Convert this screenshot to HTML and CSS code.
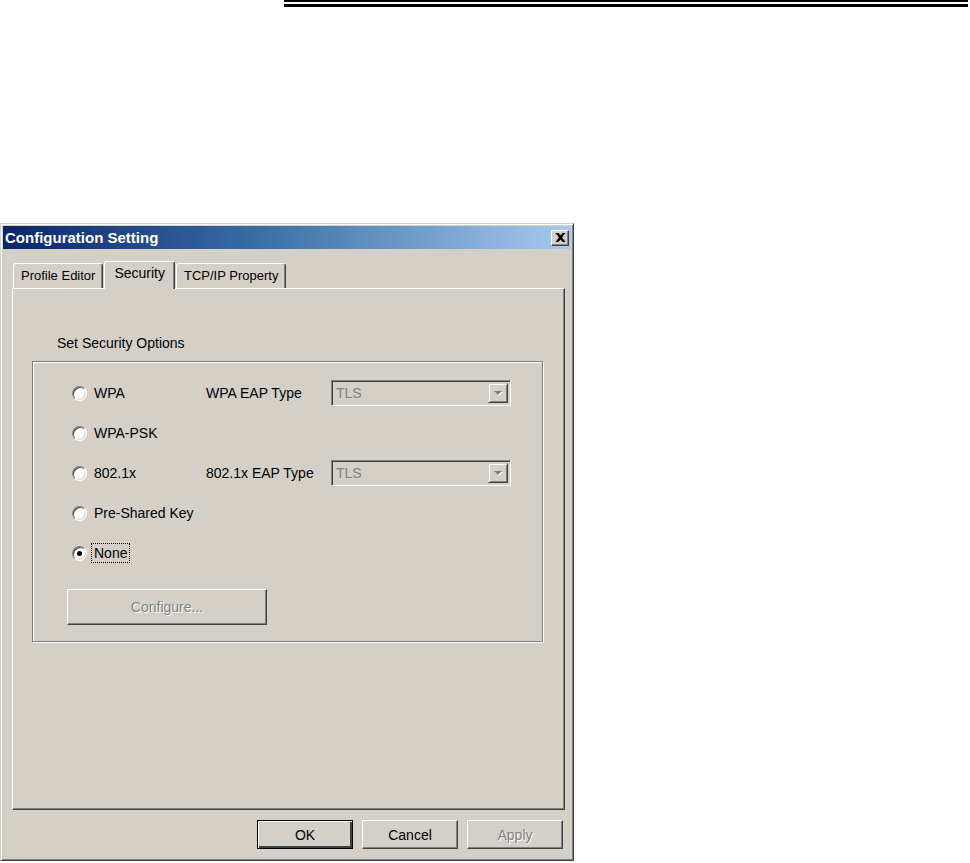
FILE: index.html
```html
<!DOCTYPE html>
<html>
<head>
	<meta charset="utf-8">
	<title>Configuration Setting</title>
	<link rel="stylesheet" href="styles.css">
</head>
<body>
	<div class="rule"></div>

	<div class="dialog">
		<div class="titlebar">
			<span class="title">Configuration Setting</span>
			<span class="close">
				<svg width="11" height="9" viewBox="0 0 11 9"><path d="M0.5 0h3l2 2.6L7.5 0h3L7 4.5 10.5 9h-3l-2-2.6L3.5 9h-3L4 4.5z" fill="#000"/></svg>
			</span>
		</div>

		<div class="tabs">
			<div class="tab">Profile Editor</div>
			<div class="tab active">Security</div>
			<div class="tab">TCP/IP Property</div>
		</div>

		<div class="panel">
			<div class="caption">Set Security Options</div>
			<div class="group">
				<div class="row">
					<div class="option"><span class="radio"></span><span class="label">WPA</span></div>
					<div class="eap">WPA EAP Type</div>
					<div class="combo"><span class="value">TLS</span><span class="arrow"></span></div>
				</div>
				<div class="row">
					<div class="option"><span class="radio"></span><span class="label">WPA-PSK</span></div>
				</div>
				<div class="row">
					<div class="option"><span class="radio"></span><span class="label">802.1x</span></div>
					<div class="eap">802.1x EAP Type</div>
					<div class="combo"><span class="value">TLS</span><span class="arrow"></span></div>
				</div>
				<div class="row">
					<div class="option"><span class="radio"></span><span class="label">Pre-Shared Key</span></div>
				</div>
				<div class="row">
					<div class="option"><span class="radio checked"></span><span class="label focus">None</span></div>
				</div>
				<div class="btn configure disabled">Configure...</div>
			</div>
		</div>

		<div class="buttons">
			<div class="btn default">OK</div>
			<div class="btn">Cancel</div>
			<div class="btn disabled">Apply</div>
		</div>
	</div>
</body>
</html>
```

FILE: styles.css
```css
* {
  box-sizing: border-box;
}

body {
  margin: 0;
  background: #fff;
  font-family: "Liberation Sans", Arial, sans-serif;
  font-size: 14px;
  color: #000;
}

.rule {
  margin-left: 284px;
  width: 684px;
  height: 7px;
  border-top: 2px solid #000;
  border-bottom: 3px solid #000;
}

.dialog {
  margin-top: 216px;
  width: 574px;
  height: 638px;
  padding: 2px;
  display: flex;
  flex-direction: column;
  background: #d4d0c8;
  border: 1px solid;
  border-color: #d4d0c8 #404040 #404040 #d4d0c8;
  box-shadow: inset 1px 1px #fff, inset -1px -1px #808080;
}

/* title bar */
.titlebar {
  height: 23px;
  flex: none;
  display: flex;
  align-items: center;
  justify-content: space-between;
  padding: 0 2px;
  background: linear-gradient(to right, #0a246a 0%, #3a6ea5 45%, #a6caf0 100%);
}

.title {
  color: #fff;
  font-weight: bold;
  font-size: 15px;
}

.close {
  width: 18px;
  height: 16px;
  display: flex;
  align-items: center;
  justify-content: center;
  background: #d4d0c8;
  border: 1px solid;
  border-color: #fff #404040 #404040 #fff;
  box-shadow: inset -1px -1px #808080;
}

/* tabs */
.tabs {
  margin-top: 12px;
  margin-left: 10px;
  height: 27px;
  flex: none;
  display: flex;
  align-items: flex-end;
  gap: 1px;
}

.tab {
  height: 25px;
  padding: 4px 7px 0 7px;
  font-size: 13px;
  background: #d4d0c8;
  border: 1px solid;
  border-bottom: none;
  border-color: #fff #404040 #fff #fff;
  border-radius: 3px 3px 0 0;
  box-shadow: inset -1px 0 #808080;
}

.tab.active {
  height: 28px;
  margin-bottom: -1px;
  padding: 3px 9px 0 9px;
  font-size: 14px;
  position: relative;
  z-index: 1;
}

/* tab page */
.panel {
  margin-left: 9px;
  width: 553px;
  height: 522px;
  flex: none;
  border: 1px solid;
  border-color: #fff #404040 #404040 #fff;
  box-shadow: inset -1px -1px #808080;
}

.caption {
  margin-top: 46px;
  padding-left: 44px;
  line-height: 16px;
}

.group {
  margin: 10px 0 0 19px;
  width: 511px;
  height: 281px;
  padding-top: 11px;
  border: 1px solid #808080;
  box-shadow: inset 1px 1px #fff, 1px 1px #fff;
}

.row {
  height: 40px;
  padding-left: 39px;
  display: flex;
  align-items: center;
}

.option {
  width: 134px;
  display: flex;
  align-items: center;
}

.radio {
  width: 15px;
  height: 15px;
  flex: none;
  border-radius: 50%;
  border: 1px solid;
  border-color: #808080 #fff #fff #808080;
  background: #fff;
  box-shadow: inset 1px 1px #404040, inset -1px -1px #d4d0c8;
  display: flex;
  align-items: center;
  justify-content: center;
}

.radio.checked::after {
  content: "";
  width: 5px;
  height: 5px;
  border-radius: 50%;
  background: #000;
}

.label {
  margin-left: 4px;
  padding: 1px 2px;
  border: 1px dotted transparent;
}

.label.focus {
  border-color: #000;
}

.eap {
  width: 125px;
}

.combo {
  width: 180px;
  height: 26px;
  display: flex;
  align-items: center;
  justify-content: space-between;
  padding: 2px;
  border: 1px solid;
  border-color: #808080 #fff #fff #808080;
  box-shadow: inset 1px 1px #404040, inset -1px -1px #d4d0c8;
}

.combo .value {
  padding-left: 2px;
  color: #808080;
}

.arrow {
  width: 20px;
  height: 20px;
  display: flex;
  align-items: center;
  justify-content: center;
  border: 1px solid;
  border-color: #d4d0c8 #404040 #404040 #d4d0c8;
  box-shadow: inset 1px 1px #fff, inset -1px -1px #808080;
}

.arrow::after {
  content: "";
  border-left: 4px solid transparent;
  border-right: 4px solid transparent;
  border-top: 4px solid #808080;
  filter: drop-shadow(1px 1px 0 #fff);
}

/* buttons */
.btn {
  width: 96px;
  height: 29px;
  display: flex;
  align-items: center;
  justify-content: center;
  background: #d4d0c8;
  border: 1px solid;
  border-color: #fff #404040 #404040 #fff;
  box-shadow: inset -1px -1px #808080;
}

.btn.default {
  border: 1px solid #000;
  box-shadow: inset 1px 1px #fff, inset -2px -2px #404040, inset -1px -1px #808080;
}

.btn.disabled {
  color: #808080;
  text-shadow: 1px 1px #fff;
}

.configure {
  margin: 16px 0 0 34px;
  width: 200px;
  height: 36px;
}

.buttons {
  margin-top: 10px;
  padding-right: 8px;
  display: flex;
  justify-content: flex-end;
  gap: 9px;
}
```
